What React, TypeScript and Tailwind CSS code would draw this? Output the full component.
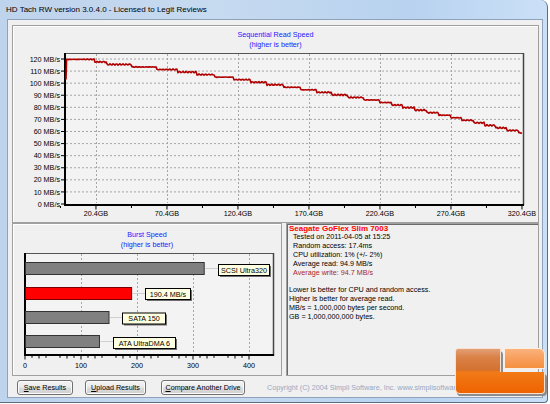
import React from "react";

const FONT = "'Liberation Sans', Arial, sans-serif";

// ── Sequential read chart helpers (page coordinates) ──
const yRead = (v: number) => 204 - v * 1.2083;
const xGb = (gb: number) => 67 + gb * 1.42;

const knots: [number, number][] = [
  [0, 119.4], [18, 119.4], [21, 117.4], [70, 111.5], [120, 103.5],
  [170, 94.5], [220, 85], [270, 72.5], [321, 59],
];

function interp(gb: number) {
  for (let i = 1; i < knots.length; i++) {
    const [g0, v0] = knots[i - 1];
    const [g1, v1] = knots[i];
    if (gb <= g1) return v0 + ((gb - g0) / (g1 - g0)) * (v1 - v0);
  }
  return knots[knots.length - 1][1];
}

function readPath() {
  const pts = [`M66 ${yRead(103).toFixed(2)}`, `L66.6 ${yRead(119.6).toFixed(2)}`];
  for (let x = 67; x <= 522; x += 1) {
    const gb = (x - 67) / 1.42;
    const v = Math.round(interp(gb) / 2.1) * 2.1 + 0.35 * Math.sin(x * 1.9) + 0.25 * Math.sin(x * 4.3);
    pts.push(`L${x} ${yRead(v).toFixed(2)}`);
  }
  return pts.join(" ");
}

const majorsGb = [20.4, 70.4, 120.4, 170.4, 220.4, 270.4, 320.4];

function ReadChart() {
  const levels = Array.from({ length: 13 }, (_, i) => i * 10);
  return (
    <svg width={525} height={172} viewBox="13 49 525 172" className="block">
      <rect x={65} y={53} width={458} height={151.5} fill="#f3f3f3" />
      {levels.slice(1).map(v => (
        <line key={v} x1={66} x2={522} y1={yRead(v)} y2={yRead(v)} stroke="#a6a6a6" strokeWidth={1} strokeDasharray="2 2" />
      ))}
      {majorsGb.slice(0, 6).map(g => (
        <line key={g} x1={Math.round(xGb(g)) + 0.5} x2={Math.round(xGb(g)) + 0.5} y1={54} y2={203} stroke="#a6a6a6" strokeWidth={1} strokeDasharray="2 2" />
      ))}
      {/* frame */}
      <line x1={65} x2={523.5} y1={53.5} y2={53.5} stroke="#555" />
      <line x1={523.5} x2={523.5} y1={53} y2={205} stroke="#444" strokeWidth={1.5} />
      <line x1={65} x2={65} y1={53} y2={206} stroke="#000" strokeWidth={2} />
      <line x1={64} x2={524} y1={205} y2={205} stroke="#000" strokeWidth={2} />
      {/* y ticks + labels */}
      {levels.map(v => (
        <g key={v}>
          <line x1={61} x2={64} y1={yRead(v)} y2={yRead(v)} stroke="#000" />
          <text x={60} y={yRead(v) + 2.6} textAnchor="end" fontSize={7.2} fontFamily={FONT} fill="#000">
            {v} MB/s
          </text>
        </g>
      ))}
      {/* x ticks + labels */}
      {majorsGb.map(g => (
        <g key={g}>
          <line x1={xGb(g)} x2={xGb(g)} y1={206} y2={209.5} stroke="#000" />
          <line x1={xGb(g) - 35.5} x2={xGb(g) - 35.5} y1={206} y2={208} stroke="#000" />
          <text x={xGb(g)} y={215.8} textAnchor="middle" fontSize={7.2} fontFamily={FONT} fill="#000">
            {g.toFixed(1)}GB
          </text>
        </g>
      ))}
      <path d={readPath()} fill="none" stroke="#b00000" strokeWidth={1.6} strokeLinejoin="round" />
    </svg>
  );
}

// ── Burst chart ──
const xBurst = (v: number) => 25 + v * 0.56;

const bars = [
  { v: 320, y: 262, fill: "#808080", stroke: "#333", label: "SCSI Ultra320", lx: 218, lw: 51, ly: 264 },
  { v: 190.4, y: 287, fill: "#ff0000", stroke: "#7a0000", label: "190.4 MB/s", lx: 145, lw: 45, ly: 288 },
  { v: 150, y: 311, fill: "#808080", stroke: "#333", label: "SATA 150", lx: 122, lw: 43, ly: 312.5 },
  { v: 133, y: 335, fill: "#808080", stroke: "#333", label: "ATA UltraDMA 6", lx: 113, lw: 62, ly: 337 },
];

function BurstChart() {
  return (
    <svg width={268} height={126} viewBox="13 249 268 126" className="block">
      <rect x={25} y={253} width={248} height={102} fill="#f3f3f3" />
      {[100, 200, 300, 400].map(v => (
        <line key={v} x1={Math.round(xBurst(v)) + 0.5} x2={Math.round(xBurst(v)) + 0.5} y1={254} y2={354} stroke="#a6a6a6" strokeDasharray="2 2" />
      ))}
      <line x1={25} x2={273.5} y1={253.5} y2={253.5} stroke="#555" />
      <line x1={273.5} x2={273.5} y1={253} y2={356} stroke="#444" strokeWidth={1.5} />
      <line x1={25} x2={25} y1={253} y2={356} stroke="#000" strokeWidth={2} />
      <line x1={24} x2={274} y1={355} y2={355} stroke="#000" strokeWidth={2} />
      {[0, 100, 200, 300, 400].map(v => (
        <g key={v}>
          <line x1={xBurst(v)} x2={xBurst(v)} y1={356} y2={359.5} stroke="#000" />
          <text x={xBurst(v)} y={367.6} textAnchor="middle" fontSize={7.2} fontFamily={FONT} fill="#000">
            {v}
          </text>
        </g>
      ))}
      {Array.from({ length: 16 }, (_, i) => i * 25 + 12.5).map(v => (
        <line key={v} x1={xBurst(v)} x2={xBurst(v)} y1={356} y2={357.8} stroke="#000" />
      ))}
      {Array.from({ length: 8 }, (_, i) => i * 50 + 25).map(v => (
        <line key={v} x1={xBurst(v)} x2={xBurst(v)} y1={356} y2={358.5} stroke="#000" />
      ))}
      {bars.map(b => (
        <g key={b.label}>
          <line x1={xBurst(b.v) + 1} x2={b.lx} y1={b.y + 6.5} y2={b.y + 6.5} stroke="#cfcfcf" />
          <rect x={25.5} y={b.y + 0.5} width={xBurst(b.v) - 25.5} height={12} fill={b.fill} stroke={b.stroke} />
          <rect x={b.lx + 2} y={b.ly + 2} width={b.lw} height={11} fill="#6e6e6e" />
          <rect x={b.lx + 0.5} y={b.ly + 0.5} width={b.lw} height={11} fill="#ffffe1" stroke="#000" />
          <text x={b.lx + b.lw / 2 + 0.5} y={b.ly + 8.8} textAnchor="middle" fontSize={7.2} fontFamily={FONT} fill="#000">
            {b.label}
          </text>
        </g>
      ))}
    </svg>
  );
}

function WinButton({ width, hot, rest }: { width: number; hot: string; rest: string }) {
  return (
    <div
      className="h-[15px] shrink-0 flex items-center justify-center rounded-[3px] border border-[#707070] bg-[linear-gradient(#f3f3f3_0%,#ebebeb_48%,#dcdcdc_52%,#cfcfcf_100%)] text-[7.2px] leading-none text-black shadow-[inset_0_0_0_1px_#fbfbfb]"
      style={{ width }}
    >
      <span className="underline">{hot}</span>
      {rest}
    </div>
  );
}

// Legit Reviews watermark, CSS shapes laid over the corner
function LegitLogo() {
  return (
    <div className="absolute left-[455px] top-[348px] w-[90px] h-[46px]">
      {/* shadow */}
      <div className="absolute left-[2px] top-[3px] w-[46px] h-[45px] rounded-[4px] bg-[#8c8c8c]" />
      <div className="absolute left-[2px] top-[26px] w-[90px] h-[22px] rounded-[4px] bg-[#8c8c8c]" />
      {/* dark L: column */}
      <div className="absolute left-0 top-0 w-[46px] h-[46px] rounded-tl-[3px] rounded-bl-[5px] border border-[#f8e0d0] bg-[linear-gradient(180deg,#e3a077_0%,#da8249_18%,#d4712f_48%,#f27a18_52%,#ee6300_100%)]" />
      {/* dark L: bottom bar */}
      <div className="absolute left-0 top-[23.5px] w-[90px] h-[22.5px] rounded-br-[4px] rounded-bl-[5px] border border-t-0 border-[#f8e0d0] bg-[linear-gradient(180deg,#f27a18_0%,#ee6300_100%)]" />
      {/* light block */}
      <div className="absolute left-[48.5px] top-0 w-[41.5px] h-[21px] rounded-tr-[6px] border border-[#fdeee2] bg-[linear-gradient(180deg,#fbb37c_0%,#f8a060_45%,#f5913f_100%)]" />
    </div>
  );
}

export default function App() {
  return (
    <div className="relative w-[550px] h-[404px] overflow-hidden bg-white" style={{ fontFamily: FONT }}>
      <div className="w-[548px] h-[403px] flex flex-col border-r border-b border-[#5a6e86] rounded-tr-[7px] rounded-br-[4px] bg-[linear-gradient(90deg,#bed3ec_0%,#c6daf0_40%,#b8d2ef_75%,#cbe0f7_100%)]">
        {/* title bar */}
        <div className="h-[19px] shrink-0 flex items-center pl-[6px] text-[8px] text-black">
          HD Tach RW version 3.0.4.0 - Licensed to Legit Reviews
        </div>

        <div className="flex-1 flex pl-[7px] pr-[4px] pb-[4px]">
          <div className="flex-1 flex flex-col bg-[#f0f0f0] border border-[#8ea3bb]">
            {/* top panel: sequential read */}
            <div className="mt-[5px] ml-[4px] w-[527px] h-[198px] border border-[#a0a0a0] shadow-[inset_1px_1px_0_#ffffff]">
              <div className="pt-[4px] text-center text-[7.2px] leading-[9.5px] text-[#2020ff]">
                <div>Sequential Read Speed</div>
                <div>(higher is better)</div>
              </div>
              <ReadChart />
            </div>

            {/* bottom row */}
            <div className="ml-[4px] flex gap-[4px]">
              <div className="w-[270px] h-[153px] border border-[#a0a0a0] shadow-[inset_1px_1px_0_#ffffff]">
                <div className="pt-[6px] text-center text-[7.2px] leading-[9.5px] text-[#2020ff]">
                  <div>Burst Speed</div>
                  <div>(higher is better)</div>
                </div>
                <BurstChart />
              </div>

              <div className="w-[253px] h-[153px] border border-[#a0a0a0] shadow-[inset_1px_1px_0_#6a6a6a] pt-[0.6px] pl-[2px] text-[7.2px] leading-[8.8px] text-black">
                <div className="text-[8px] font-bold text-[#ff0000]">Seagate GoFlex Slim 7003</div>
                <div className="pl-[4px]">
                  <div>Tested on 2011-04-05 at 15:25</div>
                  <div>Random access: 17.4ms</div>
                  <div>CPU utilization: 1% (+/- 2%)</div>
                  <div>Average read: 94.9 MB/s</div>
                  <div className="text-[#a82828]">Average write: 94.7 MB/s</div>
                </div>
                <div className="h-[8.8px]" />
                <div>Lower is better for CPU and random access.</div>
                <div>Higher is better for average read.</div>
                <div>MB/s = 1,000,000 bytes per second.</div>
                <div>GB = 1,000,000,000 bytes.</div>
              </div>
            </div>

            {/* buttons */}
            <div className="mt-[4px] flex items-center pl-[9px] pr-[4px]">
              <WinButton width={56} hot="S" rest="ave Results" />
              <div className="w-[12px] shrink-0" />
              <WinButton width={61} hot="U" rest="pload Results" />
              <div className="w-[15px] shrink-0" />
              <WinButton width={84} hot="C" rest="ompare Another Drive" />
              <div className="ml-[22px] shrink-0 text-[7.2px] leading-none text-[#95a9c4] whitespace-nowrap">
                Copyright (C) 2004 Simpli Software, Inc. www.simplisoftware.com
              </div>
              <div className="ml-auto self-end w-[50px] h-[3px] shrink-0 bg-[#505050]" />
            </div>
          </div>
        </div>
      </div>
      <LegitLogo />
    </div>
  );
}
